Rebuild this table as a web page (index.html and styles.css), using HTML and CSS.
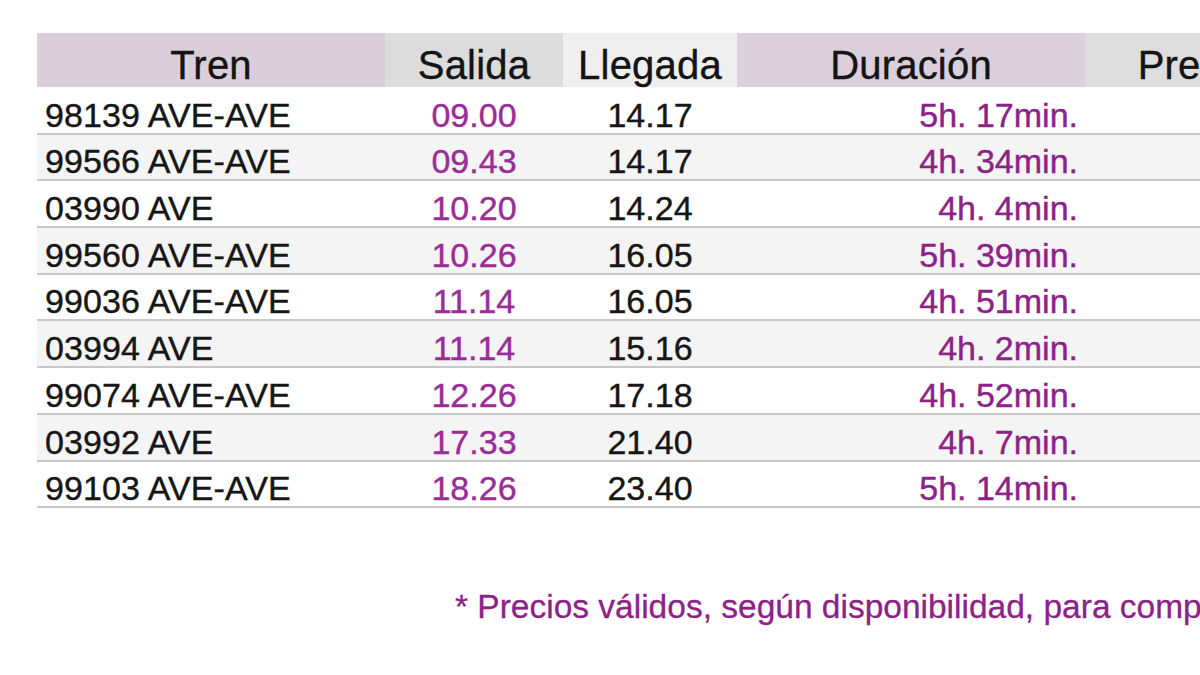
FILE: index.html
```html
<!DOCTYPE html>
<html lang="es">
<head>
<meta charset="utf-8">
<title>Horarios AVE</title>
<link rel="stylesheet" href="styles.css">
</head>
<body>
<div class="page">
  <table class="horarios">
    <colgroup>
      <col class="c-tren"><col class="c-salida"><col class="c-llegada"><col class="c-dur"><col class="c-precio">
    </colgroup>
    <thead>
      <tr>
        <th class="h-tren">Tren</th>
        <th class="h-salida">Salida</th>
        <th class="h-llegada">Llegada</th>
        <th class="h-dur">Duración</th>
        <th class="h-precio">Precio</th>
      </tr>
    </thead>
    <tbody>
      <tr><td class="tren">98139 AVE-AVE</td><td class="salida">09.00</td><td class="llegada">14.17</td><td class="dur">5h. 17min.</td><td class="precio"></td></tr>
      <tr><td class="tren">99566 AVE-AVE</td><td class="salida">09.43</td><td class="llegada">14.17</td><td class="dur">4h. 34min.</td><td class="precio"></td></tr>
      <tr><td class="tren">03990 AVE</td><td class="salida">10.20</td><td class="llegada">14.24</td><td class="dur">4h. 4min.</td><td class="precio"></td></tr>
      <tr><td class="tren">99560 AVE-AVE</td><td class="salida">10.26</td><td class="llegada">16.05</td><td class="dur">5h. 39min.</td><td class="precio"></td></tr>
      <tr><td class="tren">99036 AVE-AVE</td><td class="salida">11.14</td><td class="llegada">16.05</td><td class="dur">4h. 51min.</td><td class="precio"></td></tr>
      <tr><td class="tren">03994 AVE</td><td class="salida">11.14</td><td class="llegada">15.16</td><td class="dur">4h. 2min.</td><td class="precio"></td></tr>
      <tr><td class="tren">99074 AVE-AVE</td><td class="salida">12.26</td><td class="llegada">17.18</td><td class="dur">4h. 52min.</td><td class="precio"></td></tr>
      <tr><td class="tren">03992 AVE</td><td class="salida">17.33</td><td class="llegada">21.40</td><td class="dur">4h. 7min.</td><td class="precio"></td></tr>
      <tr><td class="tren">99103 AVE-AVE</td><td class="salida">18.26</td><td class="llegada">23.40</td><td class="dur">5h. 14min.</td><td class="precio"></td></tr>
    </tbody>
  </table>
  <p class="nota">* Precios válidos, según disponibilidad, para compras realizadas con antelación.</p>
</div>
</body>
</html>
```

FILE: styles.css
```css
html, body {
  margin: 0;
  padding: 0;
  background: #ffffff;
  overflow: hidden;
}

body {
  width: 1200px;
  height: 675px;
  font-family: "Liberation Sans", Arial, sans-serif;
  color: #151515;
}

.page {
  padding: 33px 0 0 37px;
  width: 1400px;
}

.horarios {
  border-collapse: collapse;
  table-layout: fixed;
  width: 1268px;
}

.c-tren { width: 348px; }
.c-salida { width: 178px; }
.c-llegada { width: 174px; }
.c-dur { width: 348px; }
.c-precio { width: 220px; }

.horarios th {
  height: 54px;
  padding: 0;
  font-size: 40px;
  font-weight: normal;
  line-height: 44px;
  vertical-align: bottom;
  text-align: center;
  color: #141414;
  -webkit-text-stroke: 0.4px #141414;
  letter-spacing: 0.2px;
}

.h-tren { background: #dbcedb; }
.h-salida { background: #dcdcdc; }
.h-llegada { background: #efefef; }
.h-dur { background: #dccfdc; }
.h-precio { background: #dddddd; }

.horarios tbody tr {
  height: 46.7px;
  border-bottom: 2px solid #c8c8c8;
}

.horarios tbody tr:nth-child(even) {
  background: #f4f4f4;
}

.horarios td {
  padding: 0;
  font-size: 34px;
  line-height: 36px;
  vertical-align: bottom;
  white-space: nowrap;
  -webkit-text-stroke: 0.4px currentColor;
}

.tren {
  text-align: left;
  padding-left: 8px !important;
  color: #161616;
  letter-spacing: 0.1px;
}

.salida {
  text-align: center;
  color: #9a2c97;
}

.llegada {
  text-align: center;
  color: #161616;
}

.dur {
  text-align: right;
  padding-right: 7px !important;
  color: #8c2288;
}

.nota {
  margin: 81px 0 0 418px;
  font-size: 33.5px;
  line-height: 36px;
  color: #8c2288;
  white-space: nowrap;
  -webkit-text-stroke: 0.3px #8c2288;
}
```
